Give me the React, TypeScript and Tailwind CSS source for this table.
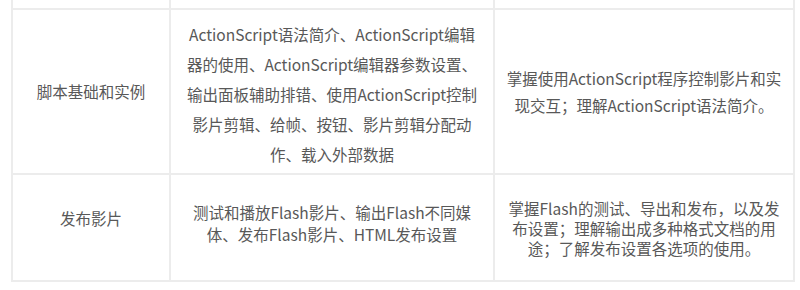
// 课程内容表格（截取部分）
const cell = 'border-2 border-[#ececec] text-center align-middle text-[15.5px] text-[#585858]';

const App = () => (
  <div className="w-[800px] h-[290px] bg-white overflow-hidden [font-family:'Noto_Sans_CJK_SC','Noto_Sans',sans-serif]">
    <table className="ml-[11px] border-collapse table-fixed w-[782px]">
      <colgroup>
        <col className="w-[158px]" />
        <col className="w-[324px]" />
        <col className="w-[300px]" />
      </colgroup>
      <tbody>
        {/* 上一行（被截掉） */}
        <tr className="h-[9px]">
          <td className={`${cell} border-t-0`} />
          <td className={`${cell} border-t-0`} />
          <td className={`${cell} border-t-0`} />
        </tr>
        <tr className="h-[165px]">
          <td className={cell}>脚本基础和实例</td>
          <td className={`${cell} leading-[30px] px-1 pt-1`}>
            ActionScript语法简介、ActionScript编辑
            <br />
            器的使用、ActionScript编辑器参数设置、
            <br />
            输出面板辅助排错、使用ActionScript控制
            <br />
            影片剪辑、给帧、按钮、影片剪辑分配动
            <br />
            作、载入外部数据
          </td>
          <td className={`${cell} leading-[27px] px-1`}>
            掌握使用ActionScript程序控制影片和实
            <br />
            现交互；理解ActionScript语法简介。
          </td>
        </tr>
        <tr className="h-[107px]">
          <td className={`${cell} pb-[18px]`}>发布影片</td>
          <td className={`${cell} leading-[22px] px-1 pb-[10px]`}>
            测试和播放Flash影片、输出Flash不同媒
            <br />
            体、发布Flash影片、HTML发布设置
          </td>
          <td className={`${cell} leading-[20px] px-1`}>
            掌握Flash的测试、导出和发布，以及发
            <br />
            布设置；理解输出成多种格式文档的用
            <br />
            途；了解发布设置各选项的使用。
          </td>
        </tr>
      </tbody>
    </table>
  </div>
);

export default App;
